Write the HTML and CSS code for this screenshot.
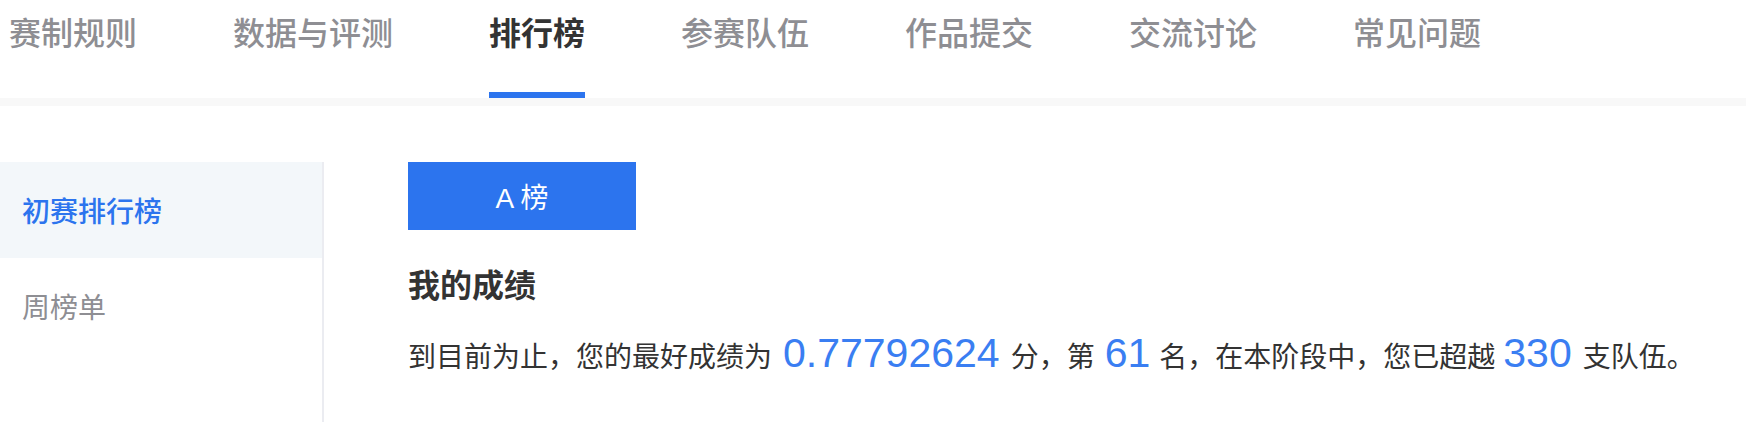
FILE: index.html
```html
<!DOCTYPE html>
<html lang="zh-CN">
<head>
<meta charset="utf-8">
<title>排行榜</title>
<link rel="stylesheet" href="styles.css">
</head>
<body>
<nav class="tabs">
  <a class="tab">赛制规则</a>
  <a class="tab">数据与评测</a>
  <a class="tab tab-active">排行榜</a>
  <a class="tab">参赛队伍</a>
  <a class="tab">作品提交</a>
  <a class="tab">交流讨论</a>
  <a class="tab">常见问题</a>
</nav>
<div class="strip"></div>
<div class="layout">
  <aside class="sidebar">
    <div class="side-item side-active">初赛排行榜</div>
    <div class="side-item">周榜单</div>
  </aside>
  <main class="main">
    <div class="board-btn"><span class="latin">A</span> 榜</div>
    <h2 class="heading">我的成绩</h2>
    <p class="score">到目前为止，您的最好成绩为<span class="num">0.77792624</span>分，第<span class="num num-rank">61</span>名，在本阶段中，您已超越<span class="num num-count">330</span>支队伍。</p>
  </main>
</div>
</body>
</html>
```

FILE: styles.css
```css
html, body {
  margin: 0;
  padding: 0;
  background: #ffffff;
}

body {
  font-family: "Noto Sans CJK SC", "Noto Sans", sans-serif;
  color: #333333;
  height: 422px;
  overflow: hidden;
}

.tabs {
  display: flex;
  gap: 96px;
  padding-left: 9px;
  height: 98px;
}

.tab {
  display: block;
  font-size: 32px;
  font-weight: 500;
  line-height: 62px;
  padding-bottom: 30px;
  border-bottom: 6px solid transparent;
  color: #8e8e93;
  white-space: nowrap;
}

.tab-active {
  color: #333333;
  font-weight: 700;
  border-bottom-color: #2c74ee;
}

.strip {
  height: 8px;
  background: #f8f8f8;
}

.layout {
  display: flex;
  margin-top: 56px;
  height: 260px;
}

.sidebar {
  width: 322px;
  flex: none;
  border-right: 2px solid #ebecf1;
}

.side-item {
  height: 96px;
  line-height: 96px;
  padding-left: 22px;
  font-size: 28px;
  color: #8e8e93;
}

.side-active {
  background: #f3f7fa;
  color: #2c74ee;
  font-weight: 500;
}

.main {
  padding-left: 84px;
  flex: 1;
}

.board-btn {
  width: 228px;
  height: 68px;
  background: #2c74ee;
  color: #ffffff;
  font-size: 28px;
  line-height: 68px;
  text-align: center;
}

.latin {
  font-family: "Liberation Sans", sans-serif;
}

.heading {
  margin: 33px 0 0;
  font-size: 32px;
  line-height: 40px;
  font-weight: 600;
  color: #333333;
}

.score {
  margin: 28px 0 0;
  font-size: 28px;
  line-height: 48px;
  color: #333333;
  white-space: nowrap;
}

.num {
  font-family: "Liberation Sans", sans-serif;
  font-size: 41px;
  line-height: 40px;
  color: #3a7ef2;
  margin: 0 11px;
}

.num-rank {
  margin-left: 10px;
  margin-right: 9px;
}

.num-count {
  margin-left: 8px;
}
```
